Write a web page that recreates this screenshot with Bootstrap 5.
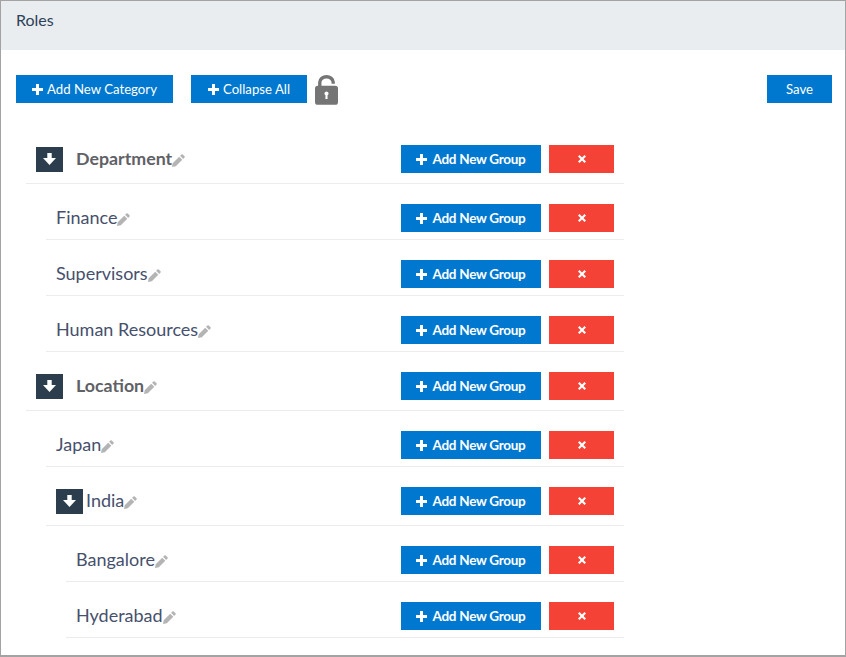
<!DOCTYPE html>
<html lang="en">
<head>
<meta charset="utf-8">
<title>Roles</title>
<link href="https://cdn.jsdelivr.net/npm/bootstrap@5.3.0/dist/css/bootstrap.min.css" rel="stylesheet">
<style>
html,body{height:100%;}
body{font-family:Lato,"Liberation Sans",sans-serif;color:#3e4a64;background:#fff;}
.frame{height:657px;border:1px solid #a3a3a3;border-bottom-width:2px;overflow:hidden;}
.head-bar{height:49px;background:#e9edf0;padding:9px 15px 0;font-size:16px;line-height:20px;color:#2f4158;}
.tools{padding:25px 13px 0 15px;height:85px;}
.act{border:0;border-radius:0;background:#0078d0;color:#fff;height:28px;font-size:13.2px;line-height:28px;padding:0;text-align:center;display:inline-flex;align-items:center;justify-content:center;}
.act svg{display:block;margin-right:4px;}
.act-cat{width:157px;}
.act-col{width:116px;margin-left:18px;}
.act-save{width:65px;}
.lock{margin-left:8px;display:block;}
.tree{width:623px;}
.node{display:flex;align-items:flex-start;border-bottom:1px solid #ececec;margin-left:45px;padding-right:10px;padding-top:20px;padding-bottom:7px;}
.node-cat{margin-left:25px;padding-top:10px;padding-bottom:10px;}
.node-loc{padding-top:20px;}
.node-sub{margin-left:65px;}
.node-mid{padding-bottom:10px;}
.label{flex:1;display:flex;align-items:center;height:28px;font-size:18px;color:#46506c;padding-left:10px;padding-bottom:2px;}
.node-cat .label{font-size:17.8px;font-weight:700;color:#5f6166;}
.arrow{width:27px;height:25px;background:#2c3e4d;display:flex;align-items:center;justify-content:center;flex:none;margin-top:2px;}
.node-cat .arrow{margin-right:13px;}
.node-mid .arrow{margin-right:3px;}
.pencil{display:block;flex:none;margin-top:4px;}
.add-g{width:140px;font-weight:700;font-size:13.5px;letter-spacing:-.27px;}
.add-g svg{margin-right:5px;}
.del-g{width:65px;margin-left:8px;background:#f44336;}
.del-g svg{margin:0;}
</style>
</head>
<body>
<svg width="0" height="0" class="d-block" aria-hidden="true">
<defs>
<symbol id="pen" viewBox="0 0 13 13"><path fill="#b4b4b4" d="M9.400.5a1 1 0 0 1 1.400 0l1.700 1.700a1 1 0 0 1 0 1.400l-1.300 1.300L8.100 1.800zM7.200 2.700l3.100 3.100-6.500 6.500L0 13l.7-3.800z"/></symbol>
<symbol id="plus" viewBox="0 0 11 11"><path fill="#fff" d="M4 0h3v4h4v3H7v4H4V7H0V4h4z"/></symbol>
<symbol id="times" viewBox="0 0 8 8"><path fill="#fff" d="M1.500 0 4 2.500 6.500 0 8 1.500 5.500 4 8 6.500 6.500 8 4 5.500 1.500 8 0 6.500 2.500 4 0 1.500z"/></symbol>
<symbol id="down" viewBox="0 0 13 12"><path fill="#fff" d="M4.300 0h4.400v5h4.300L6.500 12 0 5h4.300z"/></symbol>
</defs>
</svg>
<div class="frame">
  <div class="head-bar">Roles</div>
  <div class="tools d-flex align-items-start">
    <button class="act act-cat" type="button"><svg width="11" height="11"><use href="#plus"/></svg>Add New Category</button>
    <button class="act act-col" type="button"><svg width="11" height="11"><use href="#plus"/></svg>Collapse All</button>
    <svg class="lock" width="23" height="30" viewBox="0 0 24 31"><path fill="none" stroke="#757575" stroke-width="3.500" d="M5 12V7.500a7 5.800 0 0 1 14 0V9"/><rect x="0" y="11" width="24" height="20" rx="3" fill="#757575"/><path fill="#fff" d="M12 17a2.200 2.200 0 0 1 1.100 4.100V25h-2.200v-3.900A2.200 2.200 0 0 1 12 17z"/></svg>
    <button class="act act-save ms-auto" type="button">Save</button>
  </div>
  <div class="tree">
    <div class="node node-cat"><div class="label"><span class="arrow"><svg width="13" height="12"><use href="#down"/></svg></span>Department<svg class="pencil" width="13" height="13"><use href="#pen"/></svg></div><button class="act add-g" type="button"><svg width="11" height="11"><use href="#plus"/></svg>Add New Group</button><button class="act del-g" type="button" aria-label="Delete"><svg width="8" height="8"><use href="#times"/></svg></button></div>
    <div class="node"><div class="label">Finance<svg class="pencil" width="13" height="13"><use href="#pen"/></svg></div><button class="act add-g" type="button"><svg width="11" height="11"><use href="#plus"/></svg>Add New Group</button><button class="act del-g" type="button" aria-label="Delete"><svg width="8" height="8"><use href="#times"/></svg></button></div>
    <div class="node"><div class="label">Supervisors<svg class="pencil" width="13" height="13"><use href="#pen"/></svg></div><button class="act add-g" type="button"><svg width="11" height="11"><use href="#plus"/></svg>Add New Group</button><button class="act del-g" type="button" aria-label="Delete"><svg width="8" height="8"><use href="#times"/></svg></button></div>
    <div class="node"><div class="label">Human Resources<svg class="pencil" width="13" height="13"><use href="#pen"/></svg></div><button class="act add-g" type="button"><svg width="11" height="11"><use href="#plus"/></svg>Add New Group</button><button class="act del-g" type="button" aria-label="Delete"><svg width="8" height="8"><use href="#times"/></svg></button></div>
    <div class="node node-cat node-loc"><div class="label"><span class="arrow"><svg width="13" height="12"><use href="#down"/></svg></span>Location<svg class="pencil" width="13" height="13"><use href="#pen"/></svg></div><button class="act add-g" type="button"><svg width="11" height="11"><use href="#plus"/></svg>Add New Group</button><button class="act del-g" type="button" aria-label="Delete"><svg width="8" height="8"><use href="#times"/></svg></button></div>
    <div class="node"><div class="label">Japan<svg class="pencil" width="13" height="13"><use href="#pen"/></svg></div><button class="act add-g" type="button"><svg width="11" height="11"><use href="#plus"/></svg>Add New Group</button><button class="act del-g" type="button" aria-label="Delete"><svg width="8" height="8"><use href="#times"/></svg></button></div>
    <div class="node node-mid"><div class="label"><span class="arrow"><svg width="13" height="12"><use href="#down"/></svg></span>India<svg class="pencil" width="13" height="13"><use href="#pen"/></svg></div><button class="act add-g" type="button"><svg width="11" height="11"><use href="#plus"/></svg>Add New Group</button><button class="act del-g" type="button" aria-label="Delete"><svg width="8" height="8"><use href="#times"/></svg></button></div>
    <div class="node node-sub"><div class="label">Bangalore<svg class="pencil" width="13" height="13"><use href="#pen"/></svg></div><button class="act add-g" type="button"><svg width="11" height="11"><use href="#plus"/></svg>Add New Group</button><button class="act del-g" type="button" aria-label="Delete"><svg width="8" height="8"><use href="#times"/></svg></button></div>
    <div class="node node-sub"><div class="label">Hyderabad<svg class="pencil" width="13" height="13"><use href="#pen"/></svg></div><button class="act add-g" type="button"><svg width="11" height="11"><use href="#plus"/></svg>Add New Group</button><button class="act del-g" type="button" aria-label="Delete"><svg width="8" height="8"><use href="#times"/></svg></button></div>
  </div>
</div>
<script src="https://cdn.jsdelivr.net/npm/bootstrap@5.3.0/dist/js/bootstrap.bundle.min.js"></script>
</body>
</html>
